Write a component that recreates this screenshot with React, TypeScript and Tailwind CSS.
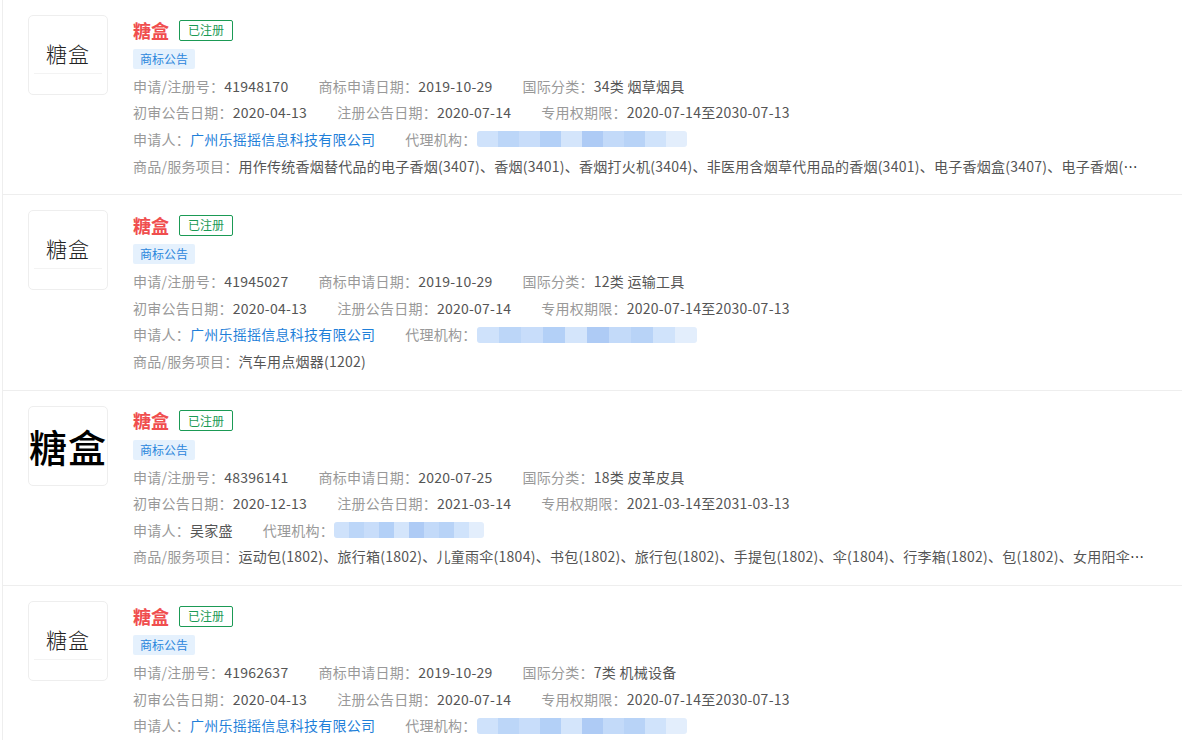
import React from "react";

type Row = {
  no: string;
  applyDate: string;
  cls: string;
  firstDate: string;
  regDate: string;
  period: string;
  applicant: string;
  applicantLink: boolean;
  agentWidth: number;
  goods: string;
  bigLogo?: boolean;
};

const rows: Row[] = [
  {
    no: "41948170",
    applyDate: "2019-10-29",
    cls: "34类 烟草烟具",
    firstDate: "2020-04-13",
    regDate: "2020-07-14",
    period: "2020-07-14至2030-07-13",
    applicant: "广州乐摇摇信息科技有限公司",
    applicantLink: true,
    agentWidth: 210,
    goods:
      "用作传统香烟替代品的电子香烟(3407)、香烟(3401)、香烟打火机(3404)、非医用含烟草代用品的香烟(3401)、电子香烟盒(3407)、电子香烟(3407)、烟盒(3405)、烟嘴(3406)",
  },
  {
    no: "41945027",
    applyDate: "2019-10-29",
    cls: "12类 运输工具",
    firstDate: "2020-04-13",
    regDate: "2020-07-14",
    period: "2020-07-14至2030-07-13",
    applicant: "广州乐摇摇信息科技有限公司",
    applicantLink: true,
    agentWidth: 220,
    goods: "汽车用点烟器(1202)",
  },
  {
    no: "48396141",
    applyDate: "2020-07-25",
    cls: "18类 皮革皮具",
    firstDate: "2020-12-13",
    regDate: "2021-03-14",
    period: "2021-03-14至2031-03-13",
    applicant: "吴家盛",
    applicantLink: false,
    agentWidth: 150,
    goods:
      "运动包(1802)、旅行箱(1802)、儿童雨伞(1804)、书包(1802)、旅行包(1802)、手提包(1802)、伞(1804)、行李箱(1802)、包(1802)、女用阳伞(1804)、钱包(1802)",
    bigLogo: true,
  },
  {
    no: "41962637",
    applyDate: "2019-10-29",
    cls: "7类 机械设备",
    firstDate: "2020-04-13",
    regDate: "2020-07-14",
    period: "2020-07-14至2030-07-13",
    applicant: "广州乐摇摇信息科技有限公司",
    applicantLink: true,
    agentWidth: 210,
    goods: "电子香烟用雾化器(0749)、电子香烟加热器(0749)",
  },
];

const shades = [
  "bg-[#cfe2fb]",
  "bg-[#bcd6f8]",
  "bg-[#c8ddfa]",
  "bg-[#b3d0f7]",
  "bg-[#d4e5fb]",
  "bg-[#aecbf5]",
  "bg-[#c3daf9]",
  "bg-[#b8d3f7]",
  "bg-[#d0e3fb]",
  "bg-[#e3eefc]",
];

function Blur({ width }: { width: number }) {
  return (
    <span
      className="inline-flex h-[16px] overflow-hidden rounded-[3px] blur-[0.6px]"
      style={{ width }}
    >
      {shades.map((c, i) => (
        <span key={i} className={`${c} h-full flex-1`} />
      ))}
    </span>
  );
}

function Item({
  label,
  children,
}: {
  label: string;
  children: React.ReactNode;
}) {
  return (
    <span className="mr-[30px] inline-flex items-center whitespace-nowrap">
      <span className="text-[#999]">{label}</span>
      <span className="text-[#555]">{children}</span>
    </span>
  );
}

function Card({ r }: { r: Row }) {
  return (
    <div className="flex border-b border-[#eee] pl-[25px] pt-[15px] pb-[15px]">
      <div className="relative flex h-[80px] w-[80px] shrink-0 items-center justify-center overflow-hidden rounded-[5px] border border-[#eee] bg-white">
        {r.bigLogo ? (
          <span className="text-[38px] font-medium leading-none tracking-[1px] text-black">
            糖盒
          </span>
        ) : (
          <>
            <span className="-mt-[4px] text-[21px] font-light leading-none tracking-[1px] text-[#222]">
              糖盒
            </span>
            <span className="absolute left-[5px] right-[5px] top-[57px] h-px bg-[#f3f3f3]" />
          </>
        )}
      </div>
      <div className="ml-[25px] min-w-0 flex-1 pr-[38px] text-[14px] tracking-[0.25px]">
        <div className="flex h-[30px] items-center tracking-normal">
          <span className="text-[18px] font-bold text-[#f04e4e]">糖盒</span>
          <span className="ml-[10px] flex h-[21px] items-center rounded-[2px] border border-[#1b9a55] px-[8px] text-[12px] leading-none text-[#1b9a55]">
            已注册
          </span>
        </div>
        <div className="mt-[4px] flex tracking-normal">
          <span className="flex h-[20px] items-center rounded-[2px] bg-[#e5f1fd] px-[7px] text-[12px] leading-none text-[#2b86dc]">
            商标公告
          </span>
        </div>
        <div className="mt-[4px] flex h-[26.6px] items-center">
          <Item label="申请/注册号：">{r.no}</Item>
          <Item label="商标申请日期：">{r.applyDate}</Item>
          <Item label="国际分类：">{r.cls}</Item>
        </div>
        <div className="flex h-[26.6px] items-center">
          <Item label="初审公告日期：">{r.firstDate}</Item>
          <Item label="注册公告日期：">{r.regDate}</Item>
          <Item label="专用权期限：">{r.period}</Item>
        </div>
        <div className="flex h-[26.6px] items-center">
          <span className="mr-[30px] inline-flex items-center whitespace-nowrap">
            <span className="text-[#999]">申请人：</span>
            <span className={r.applicantLink ? "text-[#1f7fd9]" : "text-[#555]"}>
              {r.applicant}
            </span>
          </span>
          <span className="inline-flex items-center whitespace-nowrap">
            <span className="text-[#999]">代理机构：</span>
            <Blur width={r.agentWidth} />
          </span>
        </div>
        <div className="flex h-[26.6px] items-center">
          <div className="min-w-0 truncate">
            <span className="text-[#999]">商品/服务项目：</span>
            <span className="text-[#555]">{r.goods}</span>
          </div>
        </div>
      </div>
    </div>
  );
}

export default function App() {
  return (
    <div
      className="min-h-[740px] w-full bg-white"
      style={{ fontFamily: '"Noto Sans CJK SC", "Noto Sans", sans-serif' }}
    >
      <div className="ml-[2px] min-h-[740px] border-l border-[#eee]">
        {rows.map((r, i) => (
          <Card key={i} r={r} />
        ))}
      </div>
    </div>
  );
}
